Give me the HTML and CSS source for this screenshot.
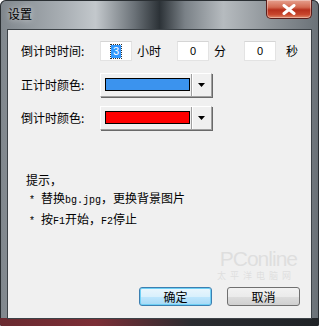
FILE: index.html
```html
<!DOCTYPE html>
<html>
<head>
<meta charset="utf-8">
<link rel="stylesheet" href="styles.css">
</head>
<body>
<div class="window">
  <div class="titlebar">
    <span class="title">设置</span>
    <div class="close">
      <svg width="14" height="11" viewBox="0 0 14 11"><path d="M2 1.5 L12 9.5 M12 1.5 L2 9.5" stroke="#fff" stroke-width="3" stroke-linecap="round"/></svg>
    </div>
  </div>
  <div class="client">
    <div class="row row-time">
      <span class="label">倒计时时间:</span>
      <span class="field"><span class="sel">3</span></span>
      <span class="unit u-hour">小时</span>
      <span class="field">0</span>
      <span class="unit u-min">分</span>
      <span class="field">0</span>
      <span class="unit u-sec">秒</span>
    </div>
    <div class="row row-c1">
      <span class="label">正计时颜色:</span>
      <div class="combo">
        <div class="swatch blue"></div>
        <div class="drop"><svg width="7" height="4" viewBox="0 0 7 4"><path d="M0 0 H7 L3.5 4 Z" fill="#000"/></svg></div>
      </div>
    </div>
    <div class="row row-c2">
      <span class="label">倒计时颜色:</span>
      <div class="combo">
        <div class="swatch red"></div>
        <div class="drop"><svg width="7" height="4" viewBox="0 0 7 4"><path d="M0 0 H7 L3.5 4 Z" fill="#000"/></svg></div>
      </div>
    </div>
    <div class="tips">
      <div class="tip-head">提示，</div>
      <div class="tip"><span class="lat">*&nbsp;</span>替换<span class="lat">bg.jpg</span>，更换背景图片</div>
      <div class="tip"><span class="lat">*&nbsp;</span>按<span class="lat">F1</span>开始，<span class="lat">F2</span>停止</div>
    </div>
    <div class="buttons">
      <div class="btn default">确定</div>
      <div class="btn">取消</div>
    </div>
    <div class="watermark"><span class="wm-big">PConline</span><span class="wm-small">太平洋电脑网</span></div>
  </div>
</div>
</body>
</html>
```

FILE: styles.css
```css
html, body {
  margin: 0;
  padding: 0;
  background: #fff;
}
body {
  width: 319px;
  height: 326px;
  overflow: hidden;
}
.window {
  width: 319px;
  height: 326px;
  box-sizing: border-box;
  border-radius: 6px 6px 2px 2px;
  background:
    linear-gradient(90deg, #7f868c 0%, #a9afb4 20%, #c3c8cc 30%, #6c7379 42%, #2c3237 50%, #7a8187 58%, #b6bbbf 70%, #8d9398 85%, #6a7177 100%);
  display: flex;
  flex-direction: column;
  padding: 0 7px 7px 7px;
  box-shadow: inset 0 0 0 1px #2a2f33;
  position: relative;
}
.window::after {
  content: "";
  position: absolute;
  left: 0; right: 0; bottom: 0;
  height: 8px;
  background: linear-gradient(90deg, #6a2a30 0%, #7c2e36 30%, #2b2c30 60%, #1f2226 100%);
  border-radius: 0 0 2px 2px;
}
.titlebar {
  height: 29px;
  display: flex;
  justify-content: space-between;
  align-items: flex-start;
}
.title {
  font-family: "Noto Sans CJK SC", sans-serif;
  font-size: 12px;
  color: #000;
  margin-top: 6px;
  margin-left: 1px;
  line-height: 16px;
  text-shadow: 0 0 6px rgba(255,255,255,0.8);
}
.close {
  width: 46px;
  height: 19px;
  box-sizing: border-box;
  border: 1px solid #5a1d1a;
  border-top: none;
  border-radius: 0 0 5px 5px;
  background: linear-gradient(180deg, #e6a08e 0%, #d36a52 40%, #b7301c 55%, #c8452c 80%, #e08a6a 100%);
  display: flex;
  align-items: center;
  justify-content: center;
  box-shadow: inset 0 0 0 1px rgba(255,255,255,0.35);
}
.client {
  flex: 1;
  background: #f0f0f0;
  border: 1px solid #3c4247;
  position: relative;
  z-index: 1;
  display: flex;
  flex-direction: column;
  font-family: "Noto Sans CJK SC", sans-serif;
  font-size: 12px;
  color: #000;
}
.row {
  display: flex;
  align-items: center;
  padding-left: 13px;
}
.label {
  width: 79px;
  flex: none;
  line-height: 16px;
}
.row-time { margin-top: 11px; height: 20px; }
.field {
  width: 32px;
  height: 20px;
  box-sizing: border-box;
  background: #fff;
  border: 1px solid #e3e3e3;
  border-top-color: #d5d5d5;
  display: flex;
  align-items: center;
  justify-content: center;
  font-family: "Liberation Sans", sans-serif;
  font-size: 11px;
}
.sel {
  background: #3399ff;
  color: #fff;
  padding: 0 2px;
  line-height: 13px;
  outline: 1px dotted #333;
}
.unit { line-height: 16px; }
.u-hour { margin-left: 5px; margin-right: 16px; }
.u-min { margin-left: 5px; margin-right: 18px; }
.u-sec { margin-left: 10px; }
.row-c1 { margin-top: 12px; }
.row-c2 { margin-top: 9px; }
.combo {
  width: 112px;
  height: 24px;
  box-sizing: border-box;
  display: flex;
  border-top: 1px solid #fff;
  border-left: 1px solid #fff;
  border-right: 1px solid #a0a0a0;
  border-bottom: 1px solid #a0a0a0;
  box-shadow: 1px 1px 0 #696969;
  background: #f0f0f0;
}
.swatch {
  width: 85px;
  height: 13px;
  box-sizing: border-box;
  border: 1px solid #000;
  margin: 4px 0 0 4px;
}
.blue { background: #3b93ee; }
.red { background: #ff0000; }
.drop {
  flex: 1;
  border-left: 1px solid #a0a0a0;
  margin-left: 1px;
  box-shadow: inset 1px 0 0 #fff;
  display: flex;
  align-items: center;
  justify-content: center;
}
.tips {
  margin-top: 42px;
  padding-left: 18px;
}
.tip-head { line-height: 16px; }
.tip {
  line-height: 16px;
  margin-left: 3px;
  margin-top: 2px;
}
.tip:first-of-type { margin-top: 7px; }
.lat {
  font-family: "Liberation Mono", monospace;
  font-size: 10px;
}
.buttons {
  margin-top: auto;
  margin-bottom: 12px;
  display: flex;
  padding-left: 131px;
  gap: 15px;
}
.btn {
  width: 73px;
  height: 19px;
  box-sizing: border-box;
  border: 1px solid #707070;
  border-radius: 3px;
  background: linear-gradient(180deg, #f2f2f2 0%, #ebebeb 50%, #dddddd 51%, #cfcfcf 100%);
  display: flex;
  align-items: center;
  justify-content: center;
  line-height: 16px;
}
.btn.default {
  border-color: #3c7fb1;
  box-shadow: inset 0 0 0 1px #6fd0f5;
  background: linear-gradient(180deg, #eaf6fd 0%, #d9f0fc 50%, #bee6fd 51%, #a7d9f5 100%);
}
.watermark {
  position: absolute;
  right: 14px;
  bottom: 37px;
  color: rgba(205,205,205,0.5);
  display: flex;
  flex-direction: column;
  align-items: flex-end;
}
.wm-big {
  font-family: "Liberation Sans", sans-serif;
  font-size: 21px;
  letter-spacing: -1px;
  line-height: 24px;
}
.wm-small {
  font-family: "Noto Sans CJK SC", sans-serif;
  font-size: 9px;
  letter-spacing: 4px;
  line-height: 10px;
  margin-right: 2px;
}
```
